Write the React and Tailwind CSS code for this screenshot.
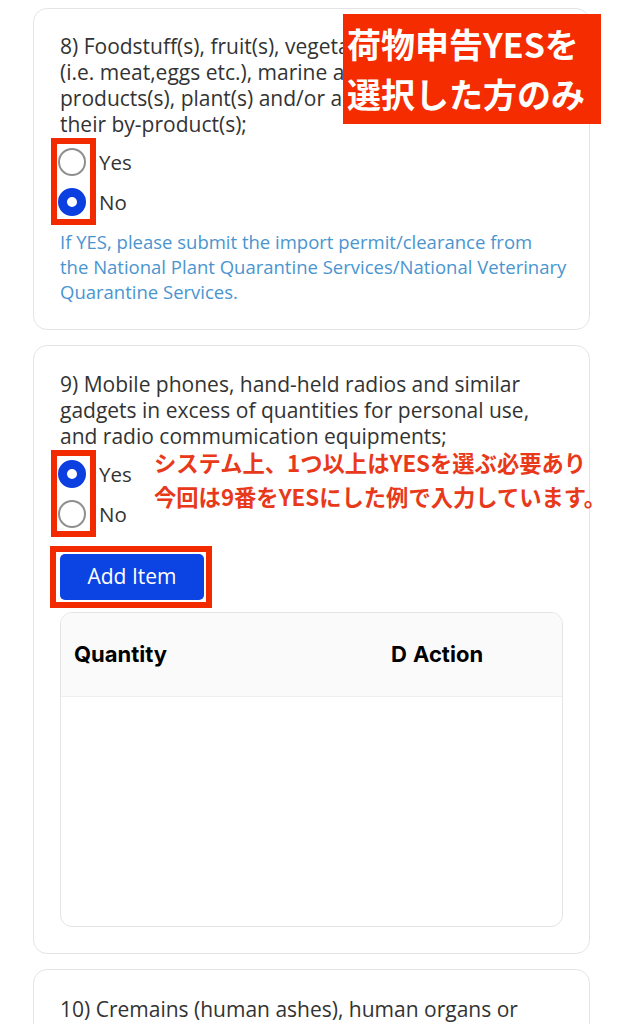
import React from "react";

const font = { fontFamily: "'Open Sans', 'Noto Sans', sans-serif" };

const Radio = ({ checked, label }) => {
  return (
    <div className="flex items-center h-[40px]">
      {checked ? (
        <span className="block w-[28px] h-[28px] rounded-full border-[9px] border-[#0b3fe0] bg-white" />
      ) : (
        <span className="block w-[28px] h-[28px] rounded-full border-2 border-[#8f8f8f] bg-white" />
      )}
      <span className="ml-[13px] text-[20.5px] text-[#333]">{label}</span>
    </div>
  );
};

const RadioGroup = ({ value }) => {
  return (
    <div className="relative ml-[-2px]">
      <Radio checked={value === "yes"} label="Yes" />
      <Radio checked={value === "no"} label="No" />
      <div className="absolute left-[-7px] top-[-4px] w-[45px] h-[87px] border-[6px] border-[#f22a00]" />
    </div>
  );
};

const App = () => {
  return (
    <div
      className="w-[623px] min-h-screen bg-white px-[33px] pt-[8px] pb-[20px] overflow-hidden"
      style={font}
    >
      <div className="flex flex-col gap-[15px]">
        {/* 8 */}
        <div className="relative border border-[#e4e4e4] rounded-[14px] px-[26px] pt-[24px] pb-[25px]">
          <div className="text-[21px] leading-[26px] text-[#333]">
            <span className="block whitespace-nowrap">8) Foodstuff(s), fruit(s), vegetable(s),</span>
            <span className="block whitespace-nowrap">(i.e. meat,eggs etc.), marine and aquatic</span>
            <span className="block whitespace-nowrap">products(s), plant(s) and/or animal(s)</span>
            <span className="block whitespace-nowrap">their by-product(s);</span>
          </div>
          <div className="mt-[5px]">
            <RadioGroup value="no" />
          </div>
          <p className="mt-[7px] text-[18.5px] leading-[25px] text-[#4a95d0] whitespace-nowrap">
            If YES, please submit the import permit/clearance from
            <br />
            the National Plant Quarantine Services/National Veterinary
            <br />
            Quarantine Services.
          </p>
          <div
            className="absolute left-[309px] top-[5px] w-[258px] h-[110px] bg-[#f42c00] flex flex-col justify-center pl-[4px] text-white font-bold text-[34px] leading-[50px]"
            style={{ fontFamily: "'Noto Sans CJK JP', sans-serif" }}
          >
            <span className="whitespace-nowrap">荷物申告YESを</span>
            <span className="whitespace-nowrap">選択した方のみ</span>
          </div>
        </div>

        {/* 9 */}
        <div className="relative border border-[#e4e4e4] rounded-[14px] px-[26px] pt-[25px] pb-[26px]">
          <div className="text-[21px] leading-[26px] text-[#333]">
            <span className="block whitespace-nowrap">9) Mobile phones, hand-held radios and similar</span>
            <span className="block whitespace-nowrap">gadgets in excess of quantities for personal use,</span>
            <span className="block whitespace-nowrap">and radio commumication equipments;</span>
          </div>
          <div className="mt-[5px]">
            <RadioGroup value="yes" />
          </div>
          <div className="mt-[20px] relative w-[144px]">
            <button
              type="button"
              className="w-[144px] h-[46px] rounded-[5px] bg-[#0b44e2] text-white text-[21px]"
            >
              Add Item
            </button>
            <div className="absolute left-[-10px] top-[-8px] w-[162px] h-[62px] border-[6px] border-[#f22a00]" />
          </div>
          <div className="mt-[12px] h-[315px] border border-[#e4e4e4] rounded-[12px] overflow-hidden">
            <div
              className="h-[84px] bg-[#fafafa] border-b border-[#efefef] flex items-center px-[13px] text-[22px] font-bold text-black"
              style={{ fontFamily: "Inter, sans-serif" }}
            >
              <span className="w-[317px]">Quantity</span>
              <span className="w-[22px]">D</span>
              <span>Action</span>
            </div>
          </div>
          <div
            className="absolute left-[120px] top-[99px] text-[22.3px] leading-[34px] font-bold text-[#e8391a]"
            style={{ fontFamily: "'Noto Sans CJK JP', sans-serif" }}
          >
            <span className="block whitespace-nowrap">システム上、1つ以上はYESを選ぶ必要あり</span>
            <span className="block whitespace-nowrap">今回は9番をYESにした例で入力しています。</span>
          </div>
        </div>

        {/* 10 */}
        <div className="border border-[#e4e4e4] rounded-[14px] px-[26px] pt-[26px] pb-[26px]">
          <div className="text-[21px] leading-[26px] text-[#333]">
            <span className="block whitespace-nowrap">10) Cremains (human ashes), human organs or</span>
            <span className="block whitespace-nowrap">tissues;</span>
          </div>
        </div>
      </div>
    </div>
  );
};

export default App;
